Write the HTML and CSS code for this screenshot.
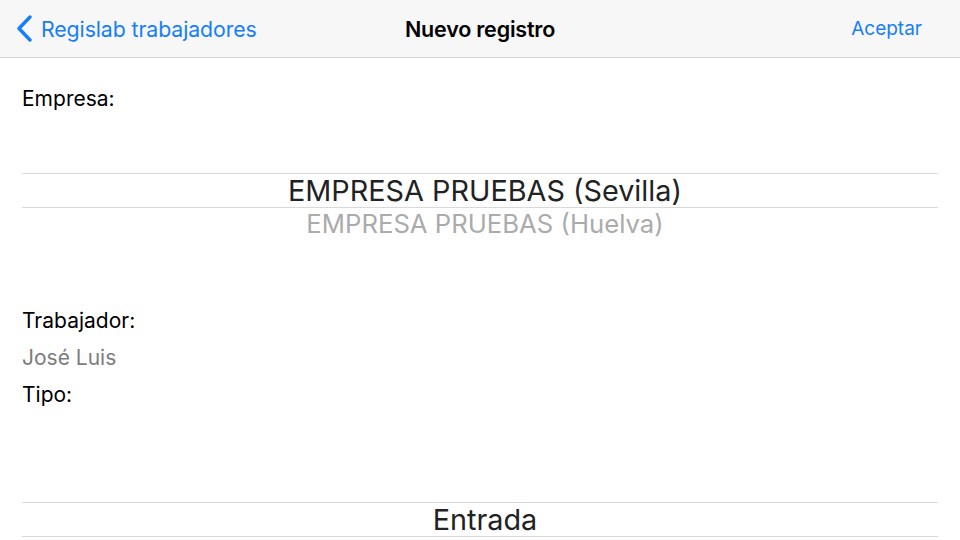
FILE: index.html
```html
<!DOCTYPE html>
<html lang="es">
<head>
  <meta charset="UTF-8">
  <meta name="viewport" content="width=device-width, initial-scale=1.0">
  <title>Nuevo registro</title>
  <link rel="stylesheet" href="styles.css">
</head>
<body>
  <!-- Barra de navegacion -->
  <header class="navbar">
    <a class="nav-back" href="#">
      <svg class="chevron" width="18" height="28" viewBox="0 0 18 28">
        <polyline points="14,2 3,13.5 14,25" fill="none" stroke="#157efb" stroke-width="3.4" stroke-linecap="round" stroke-linejoin="round"/>
      </svg>
      <span>Regislab trabajadores</span>
    </a>
    <h1 class="nav-title">Nuevo registro</h1>
    <a class="nav-action" href="#">Aceptar</a>
  </header>

  <main class="form">
    <p class="field-label first">Empresa:</p>
    <div class="picker picker-empresa">
      <div class="picker-row selected">EMPRESA PRUEBAS (Sevilla)</div>
      <div class="picker-row">EMPRESA PRUEBAS (Huelva)</div>
    </div>

    <p class="field-label worker">Trabajador:</p>
    <p class="field-value">José Luis</p>
    <p class="field-label">Tipo:</p>

    <div class="picker picker-tipo">
      <div class="picker-row selected">Entrada</div>
    </div>
  </main>
</body>
</html>
```

FILE: styles.css
```css
/* Basic Styles */
body {
  font-family: Inter, "Noto Sans", Arial, sans-serif;
  margin: 0;
  padding: 0;
  background-color: #fff;
  color: #000;
  height: 540px;
  overflow: hidden;
}

/* Navbar */
.navbar {
  height: 57px;
  background-color: #f7f7f7;
  border-bottom: 1px solid #d4d4d4;
  display: flex;
  align-items: center;
  justify-content: space-between;
  padding: 0 38px 0 16px;
  position: relative;
}

.nav-back {
  display: flex;
  align-items: center;
  gap: 7px;
  color: #157efb;
  text-decoration: none;
  font-size: 21.3px;
  letter-spacing: -0.1px;
}

.chevron {
  display: block;
}

.nav-title {
  position: absolute;
  left: 0;
  right: 0;
  margin: 0;
  text-align: center;
  font-size: 21.5px;
  font-weight: 600;
  pointer-events: none;
  letter-spacing: -0.2px;
}

.nav-action {
  color: #157efb;
  text-decoration: none;
  font-size: 19px;
}

/* Form */
.form {
  padding: 0 22px;
}

.field-label,
.field-value {
  margin: 0;
  font-size: 21px;
  line-height: 37px;
}

.field-label.first {
  margin-top: 22px;
}

.field-label.worker {
  margin-top: 62px;
}

.field-value {
  color: #7c7c7c;
}

/* Picker */
.picker-empresa {
  margin-top: 56px;
}

.picker-tipo {
  margin-top: 89px;
}

.picker-row {
  text-align: center;
  padding-left: 10px;
  font-size: 25.7px;
  line-height: 32px;
  color: #ababab;
}

.picker-row.selected {
  border-top: 1px solid #d9d9d9;
  border-bottom: 1px solid #d9d9d9;
  font-size: 28.8px;
  line-height: 33px;
  color: #222;
}
```
